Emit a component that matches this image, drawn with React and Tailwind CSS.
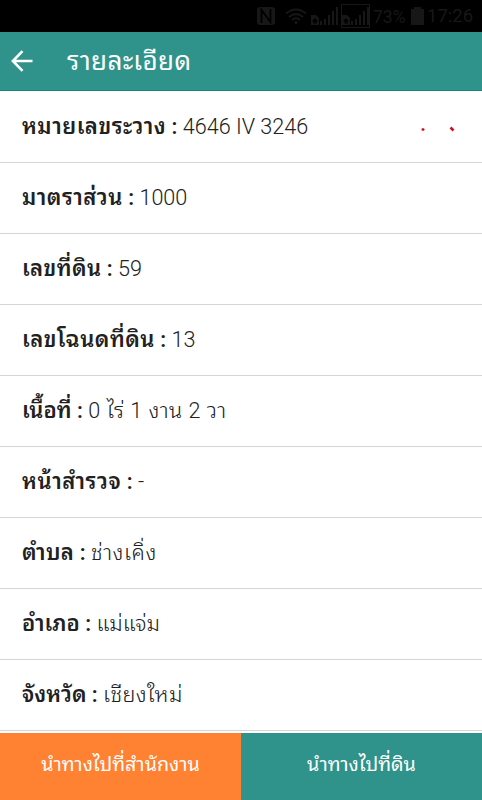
const rows = [
  { label: 'หมายเลขระวาง', value: '4646 IV 3246', labelFit: 'tracking-[0.5px]', valueFit: '', marked: true },
  { label: 'มาตราส่วน', value: '1000', labelFit: 'tracking-[0.5px]', valueFit: '' },
  { label: 'เลขที่ดิน', value: '59', labelFit: 'tracking-[0.4px]', valueFit: '' },
  { label: 'เลขโฉนดที่ดิน', value: '13', labelFit: 'tracking-[0.5px]', valueFit: '' },
  { label: 'เนื้อที่', value: '0 ไร่ 1 งาน 2 วา', labelFit: '', valueFit: 'tracking-[0.5px]' },
  { label: 'หน้าสำรวจ', value: '-', labelFit: 'tracking-[0.6px]', valueFit: '' },
  { label: 'ตำบล', value: 'ช่างเคิ่ง', labelFit: 'tracking-[0.4px]', valueFit: 'tracking-[0.6px]' },
  { label: 'อำเภอ', value: 'แม่แจ่ม', labelFit: '', valueFit: '' },
  { label: 'จังหวัด', value: 'เชียงใหม่', labelFit: '', valueFit: 'tracking-[0.4px]' },
];

function Signal() {
  return (
    <svg width="27" height="20" viewBox="0 0 27 20" fill="currentColor" className="shrink-0">
      <path fillRule="evenodd" d="M0 9h5l3 3v7H0zM1.500 14.500v1h1v2h3v-2h1v-1L4 12z" />
      <path d="M9 15h2v4H9zM13 13h2v6h-2zM17 9h2v10h-2zM21 5h2v14h-2zM25 1h2v18h-2z" />
    </svg>
  );
}

function StatusBar() {
  return (
    <div className="flex h-8 shrink-0 items-center bg-black pl-[257px] text-[#171717]">
      <svg width="18" height="18" viewBox="0 0 18 18" className="shrink-0">
        <rect width="18" height="18" rx="3" fill="currentColor" />
        <path d="M4.500 16V3l9 12V2" fill="none" stroke="#000" strokeWidth="1.800" />
      </svg>
      <svg width="22" height="17" viewBox="0 0 22 17" className="ml-[10px] shrink-0" fill="none" stroke="currentColor" strokeWidth="2">
        <path d="M1 5.500q10-8 20 0M4 9q7-6 14 0M7 12q4-3.500 8 0" />
        <circle cx="11" cy="14.500" r="1.500" fill="currentColor" stroke="none" />
      </svg>
      <div className="ml-[4px]"><Signal /></div>
      <div className="ml-[3px] flex h-[24px] w-[29px] shrink-0 items-center justify-center border border-current"><Signal /></div>
      <span className="ml-[3px] w-[36px] pt-[2px] text-[17.500px] whitespace-nowrap">73%</span>
      <svg width="13" height="18" viewBox="0 0 13 18" fill="currentColor" className="ml-[2px] shrink-0">
        <path d="M3 0h7v2h3v16H0V2h3z" />
      </svg>
      <span className="ml-[3px] pt-[2px] text-[18.500px]">17:26</span>
    </div>
  );
}

export default function App() {
  return (
    <div className="flex h-[800px] w-[482px] flex-col overflow-hidden bg-white font-['Roboto','Noto_Sans_Thai_Looped','Loma',sans-serif] text-[#212121]">
      <StatusBar />
      <header className="flex h-[59px] shrink-0 items-center border-b border-[#14897c] bg-[#2f938b] text-white">
        <svg width="22" height="22" viewBox="0 0 22 22" fill="none" stroke="currentColor" strokeWidth="2.600" className="ml-[11px] shrink-0">
          <path d="M11.500 1.200 1.900 11l9.600 9.800M1.900 11H21.500" />
        </svg>
        <h1 className="ml-[34px] text-[26px] leading-8 tracking-[0.4px]">รายละเอียด</h1>
      </header>
      <main className="flex-1 overflow-hidden pt-px">
        {rows.map(({ label, value, labelFit, valueFit, marked }) => (
          <div key={label} className="flex h-[71px] items-center justify-between border-b border-[#d4d4d4] pr-[27px] pl-[22px] text-[21.600px] leading-7">
            <span className="whitespace-pre">
              <b className="font-semibold"><span className={'text-[22px] ' + labelFit}>{label}</span> :</b>{' '}
              <span className={'font-[350] ' + valueFit}>{value}</span>
            </span>
            {marked && (
              <svg width="35" height="6" viewBox="0 0 35 6" className="mt-[4px]" fill="none" stroke="#d0101c">
                <path d="M1.500 3.500h3M3 2v3" strokeWidth="1.300" />
                <path d="M30.500 1.500 33.500 4.500" strokeWidth="2.600" />
              </svg>
            )}
          </div>
        ))}
      </main>
      <footer className="flex h-[67px] shrink-0 text-[19.700px] text-white">
        <button className="w-[241px] bg-[#ff8132] pb-1">นำทางไปที่สำนักงาน</button>
        <button className="w-[241px] bg-[#2f938b] pb-1">นำทางไปที่ดิน</button>
      </footer>
    </div>
  );
}
